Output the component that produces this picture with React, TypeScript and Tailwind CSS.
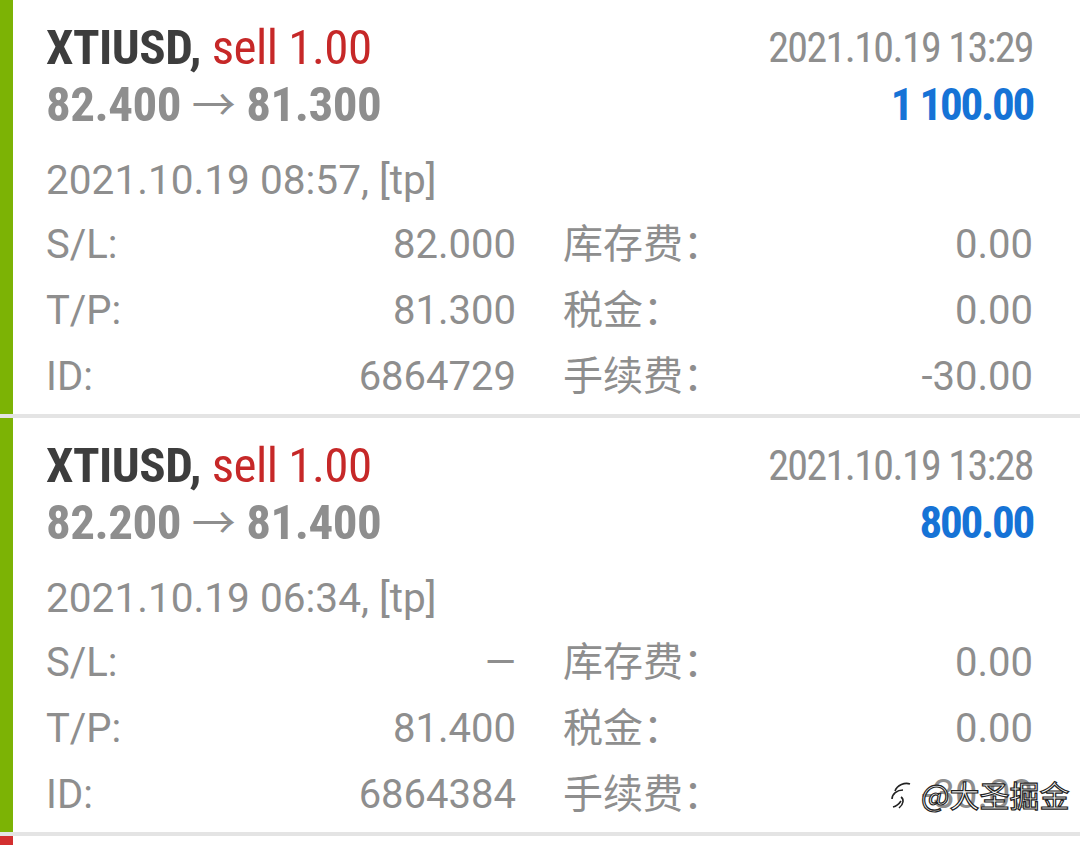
import React from "react";

type Trade = {
  open: string;
  close: string;
  time: string;
  profit: string;
  opened: string;
  sl: string;
  tp: string;
  id: string;
  swap: string;
  tax: string;
  fee: string;
};

const trades: Trade[] = [
  {
    open: "82.400",
    close: "81.300",
    time: "2021.10.19 13:29",
    profit: "1 100.00",
    opened: "2021.10.19 08:57, [tp]",
    sl: "82.000",
    tp: "81.300",
    id: "6864729",
    swap: "0.00",
    tax: "0.00",
    fee: "-30.00",
  },
  {
    open: "82.200",
    close: "81.400",
    time: "2021.10.19 13:28",
    profit: "800.00",
    opened: "2021.10.19 06:34, [tp]",
    sl: "—",
    tp: "81.400",
    id: "6864384",
    swap: "0.00",
    tax: "0.00",
    fee: "-30.00",
  },
];

const cond = "[font-family:'Roboto_Condensed','Liberation_Sans_Narrow',Roboto,sans-serif] [font-stretch:75%]";

const Row = ({ a, av, b, bv }: { a: string; av: string; b: string; bv: string }) => (
  <div className="grid grid-cols-2 gap-x-[47px] h-[66px] leading-[66px]">
    <div className="flex justify-between">
      <span>{a}</span>
      <span>{av}</span>
    </div>
    <div className="flex justify-between">
      <span>{b}</span>
      <span>{bv}</span>
    </div>
  </div>
);

const TradeCard = ({ t }: { t: Trade }) => (
  <div>
    <div className="flex">
      <div className="w-[13px] bg-[#7cb305]" />
      <div className="flex-1 pl-[33px] pr-[47px] pt-[21px] pb-[4px]">
        <div className={`flex justify-between ${cond}`}>
          <div>
            <div className="h-[54px] text-[49px] leading-[54px] font-bold tracking-[-0.5px] text-[#3d3d3d]">
              XTIUSD, <span className="font-normal text-[#c62828]">sell 1.00</span>
            </div>
            <div className="mt-[3px] h-[54px] overflow-visible text-[49px] leading-[54px] font-bold tracking-[-0.5px] text-[#8e8e8e] whitespace-nowrap">
              {t.open}{" "}
              <span className="font-normal text-[44px] leading-[0] [font-family:'Noto_Sans_CJK_SC',sans-serif]">→</span>
              {" "}{t.close}
            </div>
          </div>
          <div className="text-right">
            <div className="h-[54px] text-[42px] leading-[54px] tracking-[-1.6px] text-[#8e8e8e]">{t.time}</div>
            <div className="mt-[3px] h-[54px] text-[45px] leading-[54px] font-bold tracking-[-2.2px] text-[#1673d6]">{t.profit}</div>
          </div>
        </div>
        <div className="mt-[17px] text-[40px] text-[#8e8e8e] [font-family:Roboto,'Noto_Sans_CJK_SC',sans-serif]">
          <div className="h-[63px] leading-[63px] text-[40.6px]">{t.opened}</div>
          <Row a="S/L:" av={t.sl} b="库存费：" bv={t.swap} />
          <Row a="T/P:" av={t.tp} b="税金：" bv={t.tax} />
          <Row a="ID:" av={t.id} b="手续费：" bv={t.fee} />
        </div>
      </div>
    </div>
    <div className="h-[4px] bg-[#e4e4e4]" />
  </div>
);

export default function App() {
  return (
    <div className="relative w-[1080px] h-[845px] overflow-hidden bg-white">
      {trades.map((t) => (
        <TradeCard key={t.id} t={t} />
      ))}
      <div className="flex">
        <div className="w-[13px] h-[20px] bg-[#d32f2f]" />
      </div>
      <div className="absolute left-[888px] top-[774px] flex items-center gap-[3px] whitespace-nowrap text-[30px] leading-[40px] text-white [-webkit-text-stroke:1.2px_#222] [font-family:'Noto_Sans_CJK_SC',sans-serif]">
        <svg width="30" height="34" viewBox="0 0 30 34" fill="none" stroke="#222" strokeWidth="1.6">
          <path d="M7 14c2-6 10-9 15-7M4 22c0-5 5-9 11-9" />
          <path d="M13 20c3 2 3 7-2 11" />
          <path d="M5 30c4-1 6-3 8-6" />
        </svg>
        <span>@大圣掘金</span>
      </div>
    </div>
  );
}
